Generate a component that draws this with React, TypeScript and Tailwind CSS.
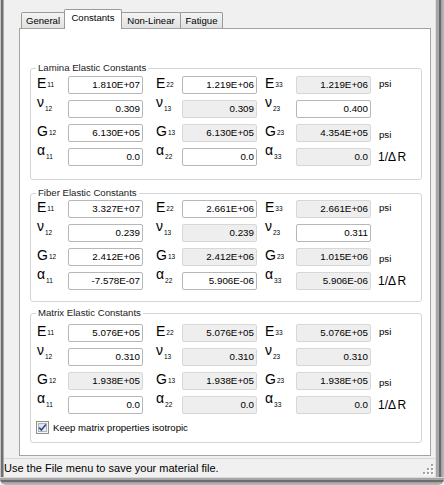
import React from "react";

type Cell = { v: string; d?: boolean };
type RowDef = {
  sym: string;
  kind: "cap" | "x";
  subs: [string, string, string];
  cells: [Cell, Cell, Cell];
  unit?: "psiE" | "psiG" | "r";
};

const mk = (
  sym: string,
  kind: "cap" | "x",
  subs: [string, string, string],
  cells: [Cell, Cell, Cell],
  unit?: "psiE" | "psiG" | "r"
): RowDef => ({ sym, kind, subs, cells, unit });

const lamina: RowDef[] = [
  mk("E", "cap", ["11", "22", "33"], [{ v: "1.810E+07" }, { v: "1.219E+06" }, { v: "1.219E+06", d: true }], "psiE"),
  mk("ν", "x", ["12", "13", "23"], [{ v: "0.309" }, { v: "0.309", d: true }, { v: "0.400" }]),
  mk("G", "cap", ["12", "13", "23"], [{ v: "6.130E+05" }, { v: "6.130E+05", d: true }, { v: "4.354E+05", d: true }], "psiG"),
  mk("α", "x", ["11", "22", "33"], [{ v: "0.0" }, { v: "0.0" }, { v: "0.0", d: true }], "r"),
];

const fiber: RowDef[] = [
  mk("E", "cap", ["11", "22", "33"], [{ v: "3.327E+07" }, { v: "2.661E+06" }, { v: "2.661E+06", d: true }], "psiE"),
  mk("ν", "x", ["12", "13", "23"], [{ v: "0.239" }, { v: "0.239", d: true }, { v: "0.311" }]),
  mk("G", "cap", ["12", "13", "23"], [{ v: "2.412E+06" }, { v: "2.412E+06", d: true }, { v: "1.015E+06", d: true }], "psiG"),
  mk("α", "x", ["11", "22", "33"], [{ v: "-7.578E-07" }, { v: "5.906E-06" }, { v: "5.906E-06", d: true }], "r"),
];

const matrix: RowDef[] = [
  mk("E", "cap", ["11", "22", "33"], [{ v: "5.076E+05" }, { v: "5.076E+05", d: true }, { v: "5.076E+05", d: true }], "psiE"),
  mk("ν", "x", ["12", "13", "23"], [{ v: "0.310" }, { v: "0.310", d: true }, { v: "0.310", d: true }]),
  mk("G", "cap", ["12", "13", "23"], [{ v: "1.938E+05", d: true }, { v: "1.938E+05", d: true }, { v: "1.938E+05", d: true }], "psiG"),
  mk("α", "x", ["11", "22", "33"], [{ v: "0.0" }, { v: "0.0", d: true }, { v: "0.0", d: true }], "r"),
];

function Label({ sym, sub, kind, cls }: { sym: string; sub: string; kind: "cap" | "x"; cls: string }) {
  return (
    <div className={`h-[18px] flex items-start shrink-0 ${cls}`}>
      <span className={kind === "cap" ? "text-[14px] leading-[14px]" : "text-[14px] leading-[5px]"}>{sym}</span>
      <span className="text-[6.5px] leading-none mt-[6px] ml-[1px]">{sub}</span>
    </div>
  );
}

function Box({ c }: { c: Cell }) {
  return (
    <div
      className={`w-[75px] h-[18px] shrink-0 border rounded-[2px] flex items-center justify-end pr-[2px] text-[9.8px] leading-none ${
        c.d ? "bg-[#eeeeee] border-[#d7d7d7]" : "bg-white border-[#b7b7b7]"
      }`}
    >
      {c.v}
    </div>
  );
}

function Unit({ u }: { u?: "psiE" | "psiG" | "r" }) {
  if (!u) return null;
  if (u === "r")
    return (
      <div className="ml-[7px] mt-[3px] text-[12px] leading-none flex">
        <span>1/Δ</span>
        <span className="ml-[1.5px]">R</span>
      </div>
    );
  return (
    <div className={`ml-[8px] text-[9.6px] leading-none ${u === "psiE" ? "mt-[3px]" : "mt-[6px]"}`}>psi</div>
  );
}

function Row({ r }: { r: RowDef }) {
  return (
    <div className="flex items-start h-[18px]">
      <Label sym={r.sym} sub={r.subs[0]} kind={r.kind} cls="w-[37px] pl-[6px]" />
      <Box c={r.cells[0]} />
      <Label sym={r.sym} sub={r.subs[1]} kind={r.kind} cls="w-[39px] pl-[13px]" />
      <Box c={r.cells[1]} />
      <Label sym={r.sym} sub={r.subs[2]} kind={r.kind} cls="w-[39px] pl-[8px]" />
      <Box c={r.cells[2]} />
      <Unit u={r.unit} />
    </div>
  );
}

function Group({
  title,
  rows,
  cls,
  children,
}: {
  title: string;
  rows: RowDef[];
  cls: string;
  children?: React.ReactNode;
}) {
  return (
    <div className={`relative border border-[#d5d5d5] rounded-[3px] ${cls}`}>
      <span className="absolute left-[5px] top-[-7px] px-[2px] bg-white text-[9.6px] leading-[12px] text-[#1a1a1a]">
        {title}
      </span>
      <div className="flex flex-col gap-[6px]">
        {rows.map((r, i) => (
          <Row key={i} r={r} />
        ))}
      </div>
      {children}
    </div>
  );
}

function CheckBox() {
  return (
    <svg width="13" height="13" viewBox="0 0 13 13" className="shrink-0">
      <defs>
        <linearGradient id="cbg" x1="0" y1="0" x2="1" y2="1">
          <stop offset="0" stopColor="#d9dde4" />
          <stop offset="1" stopColor="#f6f7f9" />
        </linearGradient>
      </defs>
      <rect x="0.5" y="0.5" width="12" height="12" fill="#f7f7f7" stroke="#8e8f8f" />
      <rect x="2.5" y="2.5" width="8" height="8" fill="url(#cbg)" stroke="#aeb3bb" />
      <path d="M3.2 6.6 L5.4 9.1 L9.9 3.4" stroke="#2d4a8a" strokeWidth="1.6" fill="none" />
    </svg>
  );
}

function Grip() {
  const pts = [
    [9, 1],
    [5, 5],
    [9, 5],
    [1, 9],
    [5, 9],
    [9, 9],
  ];
  return (
    <svg width="12" height="12" viewBox="0 0 12 12" className="self-end mb-[2px] mr-[1px] shrink-0">
      {pts.map(([x, y], i) => (
        <g key={i}>
          <rect x={x + 1} y={y + 1} width="2" height="2" fill="#ffffff" />
          <rect x={x} y={y} width="2" height="2" fill="#a2a2a2" />
        </g>
      ))}
    </svg>
  );
}

function Tab({ label, cls }: { label: string; cls: string }) {
  return (
    <div
      className={`h-[16px] border border-b-0 border-[#9a9a9a] rounded-t-[2px] bg-[linear-gradient(#f4f4f4,#e1e1e1)] flex items-center justify-center text-[9.6px] leading-[11px] ${cls}`}
    >
      {label}
    </div>
  );
}

export default function App() {
  return (
    <div className="w-[444px] h-[485px] bg-[#f0f0f0] flex flex-col overflow-hidden font-['Liberation_Sans',Arial,sans-serif] text-black">
      <div className="flex h-[477px]">
        <div className="w-[4px] shrink-0 bg-[linear-gradient(to_right,#c6c6c6_0px,#c6c6c6_1px,#6f6f6f_1px,#6f6f6f_3px,#ababab_3px,#ababab_4px)]" />
        <div className="w-[431px] shrink-0 flex flex-col">
          <div className="relative z-10 h-[28px] flex items-end pl-[17px]">
            <Tab label="General" cls="w-[44px]" />
            <div className="relative z-10 w-[58px] h-[20px] -mb-px -ml-px bg-white border border-b-0 border-[#9a9a9a] rounded-t-[2px] flex justify-center pt-[2px] text-[9.6px] leading-[11px]">
              Constants
            </div>
            <Tab label="Non-Linear" cls="w-[60px] -ml-px" />
            <Tab label="Fatigue" cls="w-[43px] -ml-px" />
          </div>
          <div className="ml-[15px] w-[412px] h-[428px] bg-white border border-[#a3a3a3] pt-[39px] pl-[10px] pr-[8px]">
            <Group title="Lamina Elastic Constants" rows={lamina} cls="pt-[7px] pb-[13px]" />
            <Group title="Fiber Elastic Constants" rows={fiber} cls="mt-[13px] pt-[6px] pb-[11px]" />
            <Group title="Matrix Elastic Constants" rows={matrix} cls="mt-[11px] pt-[10px] pb-[8px]">
              <div className="mt-[7px] ml-[5px] flex items-center gap-[4px] h-[13px]">
                <CheckBox />
                <span className="text-[9.6px] leading-none">Keep matrix properties isotropic</span>
              </div>
            </Group>
          </div>
          <div className="mt-[2px] h-[19px] border-t border-[#d9d9d9] flex items-center justify-between">
            <span className="text-[11px] leading-none">Use the File menu to save your material file.</span>
            <Grip />
          </div>
        </div>
        <div className="w-[9px] shrink-0 bg-[linear-gradient(to_right,#dedede_0px,#dedede_1px,#a7a7a7_1px,#a7a7a7_4px,#6b6b6b_4px,#6b6b6b_6px,#9b9b9b_6px,#bcbcbc_9px)]" />
      </div>
      <div className="h-[8px] rounded-b-[6px] bg-[linear-gradient(to_bottom,#dadada_0px,#dadada_1px,#a5a5a5_1px,#a5a5a5_3px,#6d6d6d_3px,#6d6d6d_5px,#9c9c9c_5px,#bdbdbd_8px)]" />
    </div>
  );
}
